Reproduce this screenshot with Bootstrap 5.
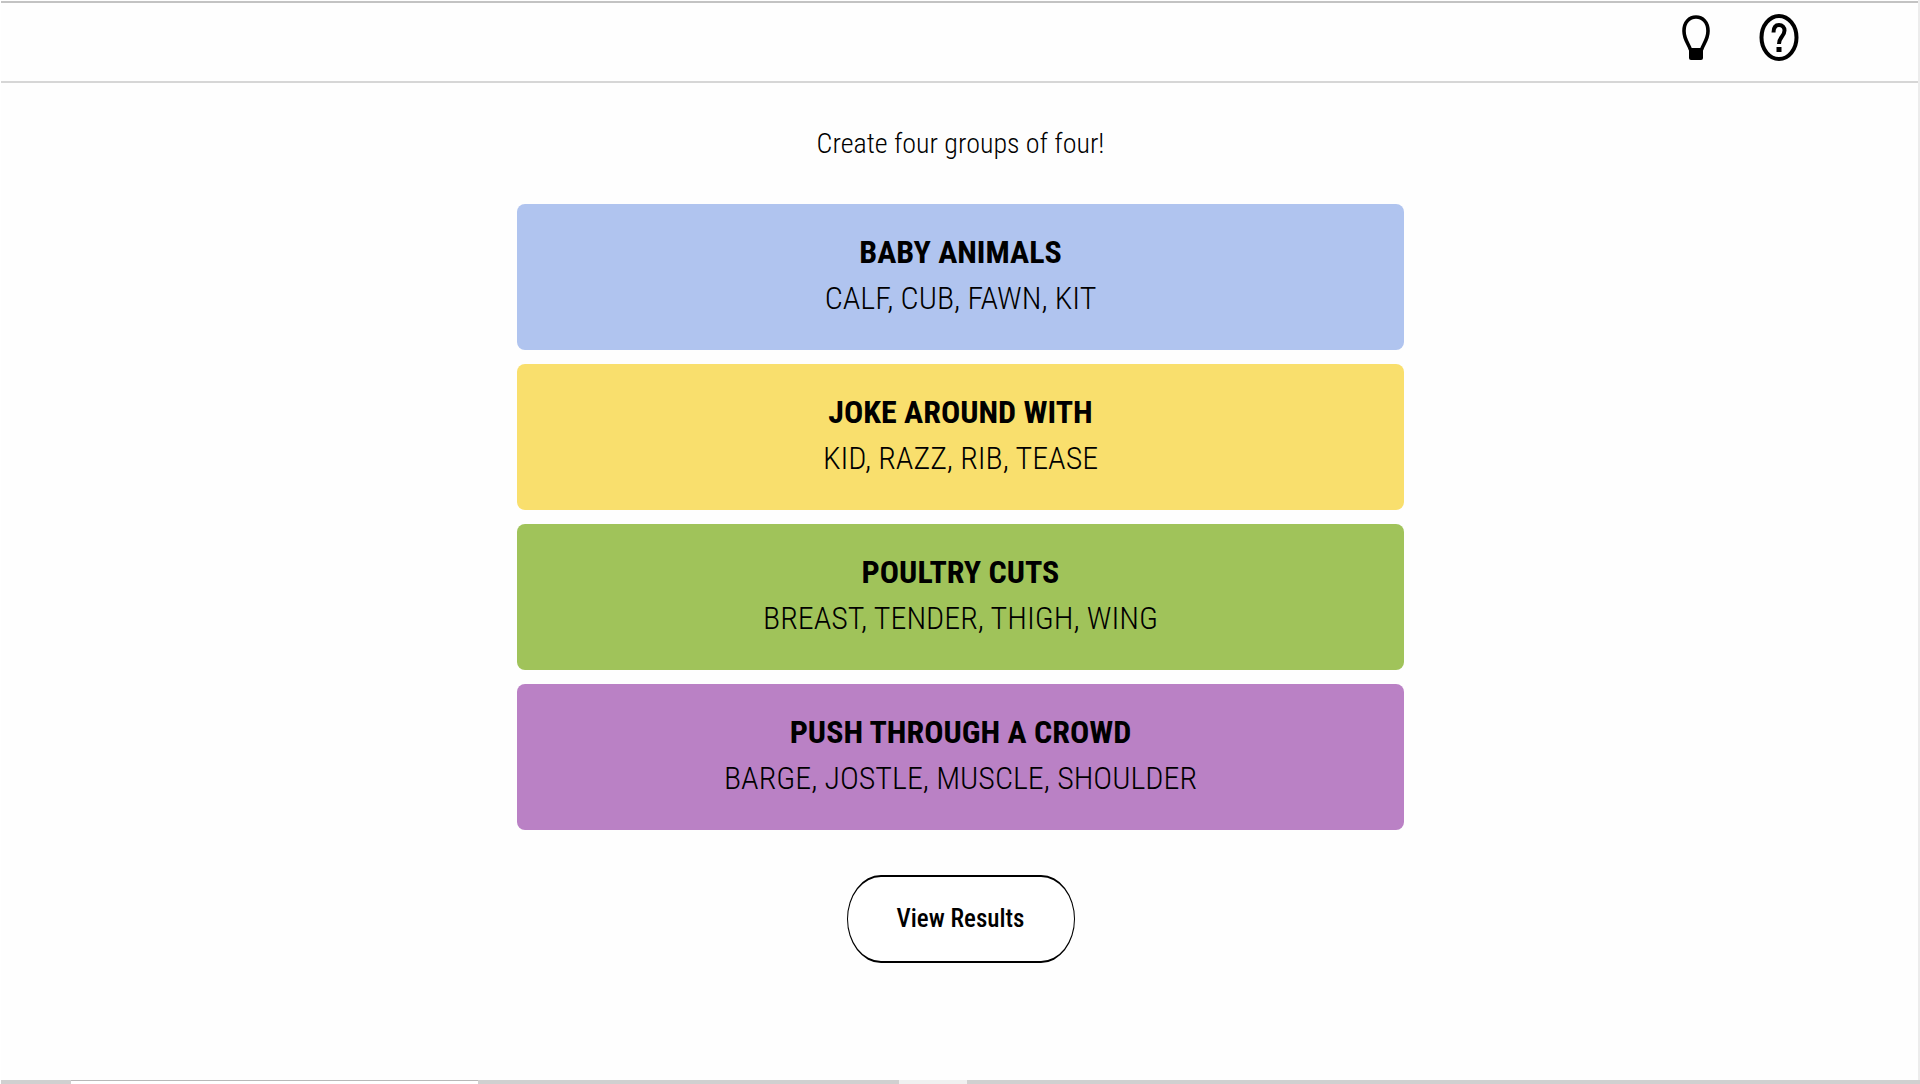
<!DOCTYPE html>
<html lang="en">
<head>
<meta charset="utf-8">
<meta name="viewport" content="width=device-width, initial-scale=1">
<title>Create four groups of four!</title>
<link href="https://cdn.jsdelivr.net/npm/bootstrap@5.3.0/dist/css/bootstrap.min.css" rel="stylesheet">
<style>
  body { font-family: "Roboto Condensed", "Liberation Sans Narrow", "Liberation Sans", sans-serif; color: #000; background: #fefefe; }
  .page { border-left: 1px solid #fff; border-right: 2px solid #ececec; }
  .page main { padding-left: 2px; }
  .toolbar { height: 82px; margin-top: 1px; padding: 0 119px 8px 0; gap: 49px; border-top: 2px solid #c3c3c3; border-bottom: 2px solid #d6d6d6; }
  .intro { font-size: 28px; font-weight: 300; line-height: 40px; margin: 41px 0 40px; }
  .board { width: 100%; max-width: 887px; gap: 14px; }
  .group { min-height: 146px; border-radius: 8px; padding-bottom: 4px; }
  .group h2, .group p { font-size: 32px; line-height: 46px; margin: 0; }
  .group h2 { font-weight: 700; }
  .group p { font-weight: 300; }
  .g-blue { background: #b0c4ef; }
  .g-yellow { background: #f9df6d; }
  .g-green { background: #a0c35a; }
  .g-purple { background: #ba81c5; }
  .results { width: 228px; height: 88px; margin-top: 45px; font-size: 25px; font-weight: 500; color: #000; background: #fff; border: solid #000; border-width: 2px 1px; border-radius: 34px / 44px; }
  .tabstrip { height: 4px; background: #d0d0d0; margin-left: 1px; }
  .tab-active { width: 407px; margin-left: 70px; background: #fff; border-top: 1px solid #b8b8b8; }
  .tab-light { width: 68px; margin-left: 421px; background: #f0f0f0; }
</style>
<script src="https://cdn.jsdelivr.net/npm/bootstrap@5.3.0/dist/js/bootstrap.bundle.min.js"></script>
</head>
<body>
<div class="d-flex flex-column min-vh-100">
  <div class="page flex-grow-1">
    <header class="toolbar d-flex justify-content-end align-items-center">
      <button class="btn p-0 border-0 d-flex" type="button" aria-label="Hints">
        <svg width="28" height="46" viewBox="0 0 28 46"><path d="M8.500 35C7.500 30 2 25 2 16C2 7 7.500 2 14 2S26 7 26 16C26 25 20.500 30 19.500 35" fill="none" stroke="#000" stroke-width="3.600"/><path d="M7 33h14v10q0 2-2 2h-10q-2 0-2-2z"/></svg>
      </button>
      <button class="btn p-0 border-0 d-flex" type="button" aria-label="Help">
        <svg width="40" height="48" viewBox="0 0 40 48"><ellipse cx="20" cy="23.500" rx="17.500" ry="21.500" fill="none" stroke="#000" stroke-width="4"/><path d="M14.500 18.500C14.500 13 16.500 11 20 11C23.500 11 25.500 13.500 25.500 16.500C25.500 22.500 20 22.500 20 30" fill="none" stroke="#000" stroke-width="4"/><path d="M17.500 33h5v5h-5z"/></svg>
      </button>
    </header>
    <main class="d-flex flex-column align-items-center text-center">
      <p class="intro">Create four groups of four!</p>
      <div class="board d-flex flex-column">
        <section class="group g-blue d-flex flex-column justify-content-center"><h2>BABY ANIMALS</h2><p>CALF, CUB, FAWN, KIT</p></section>
        <section class="group g-yellow d-flex flex-column justify-content-center"><h2>JOKE AROUND WITH</h2><p>KID, RAZZ, RIB, TEASE</p></section>
        <section class="group g-green d-flex flex-column justify-content-center"><h2>POULTRY CUTS</h2><p>BREAST, TENDER, THIGH, WING</p></section>
        <section class="group g-purple d-flex flex-column justify-content-center"><h2>PUSH THROUGH A CROWD</h2><p>BARGE, JOSTLE, MUSCLE, SHOULDER</p></section>
      </div>
      <button class="results" type="button">View Results</button>
    </main>
  </div>
  <footer class="tabstrip d-flex"><div class="tab-active"></div><div class="tab-light"></div></footer>
</div>
</body>
</html>
